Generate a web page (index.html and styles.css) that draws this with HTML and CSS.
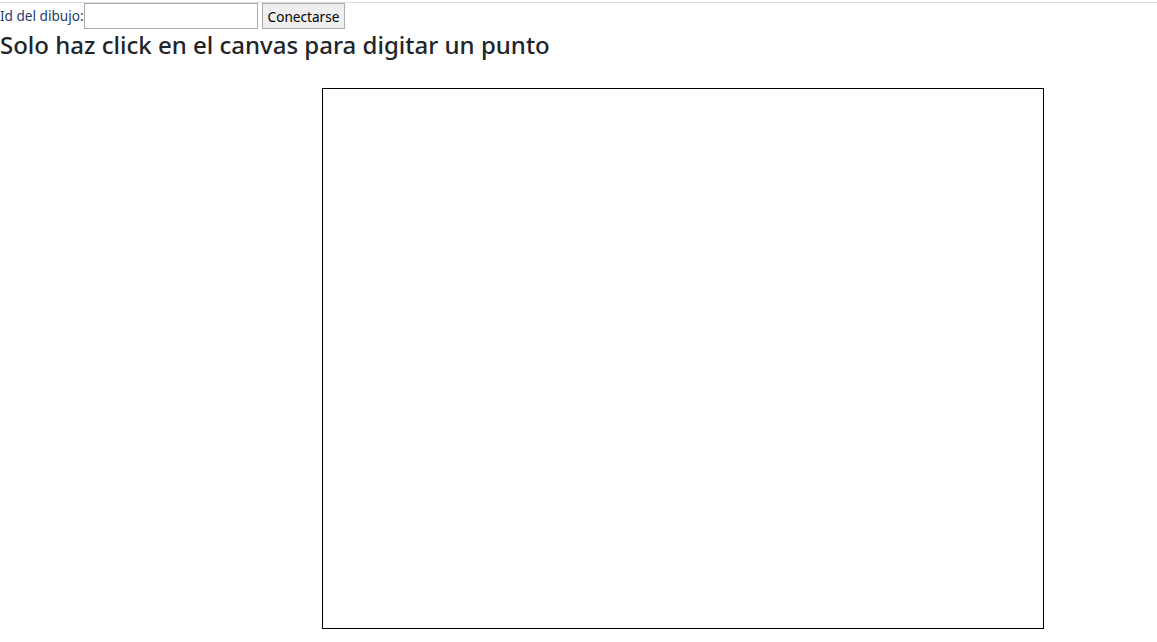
FILE: index.html
```html
<!DOCTYPE html>
<html>
<head>
<meta charset="utf-8">
<link rel="stylesheet" href="styles.css">
</head>
<body>
<div class="topline"></div>
<div class="controls">
  <label class="lbl" for="drawid">Id del dibujo:</label><input id="drawid" class="inp" type="text"><button class="btn">Conectarse</button>
</div>
<h4 class="title">Solo haz click en el canvas para digitar un punto</h4>
<div class="stage">
  <canvas class="board" width="720" height="539"></canvas>
</div>
</body>
</html>
```
FILE: styles.css
```css
html, body {
  margin: 0;
  padding: 0;
  background: #fff;
}
body {
  font-family: "Noto Sans", "Open Sans", sans-serif;
  color: #212529;
}
.topline {
  margin-top: 2px;
  height: 1px;
  background: #dcdcdc;
}
.controls {
  display: flex;
  align-items: center;
  height: 26px;
}
.lbl {
  font-size: 13.6px;
  line-height: 26px;
  color: #24406e;
}
.inp {
  box-sizing: border-box;
  width: 174px;
  height: 26px;
  margin: 0;
  border: 1px solid #a9a9a9;
  padding: 1px 2px;
  font-family: inherit;
}
.btn {
  box-sizing: border-box;
  height: 26px;
  margin: 0 0 0 4px;
  padding: 0 5px;
  border: 1px solid #adadad;
  background: #efefef;
  font-family: "Noto Sans", sans-serif;
  font-size: 13.6px;
  color: #000;
  border-radius: 0;
}
.title {
  margin: 0;
  font-size: 24px;
  font-weight: 500;
  line-height: 32px;
}
.stage {
  padding-top: 27px;
  padding-left: 322px;
}
.board {
  display: block;
  border: 1px solid #000;
}
```
